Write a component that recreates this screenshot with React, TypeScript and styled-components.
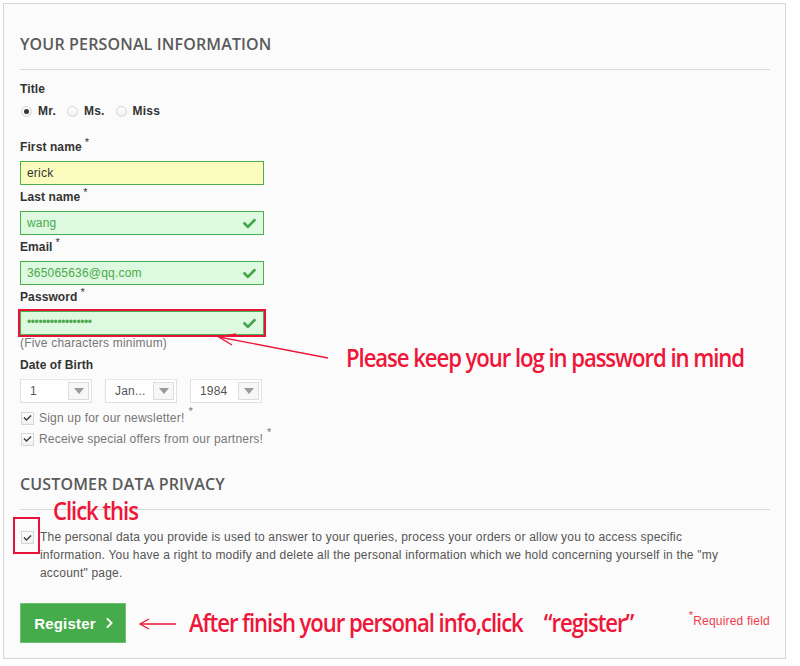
import React from "react";
import styled, { createGlobalStyle } from "styled-components";
import { FaCheck, FaChevronRight } from "react-icons/fa";

const Global = createGlobalStyle`
  html, body { margin: 0; padding: 0; background: #ffffff; }
  body { font-family: "Liberation Sans", Arial, sans-serif; letter-spacing: 0.2px; }
`;

const Frame = styled.div`
  position: relative;
  margin: 3px 0 0 3px;
  width: 783px;
  box-sizing: border-box;
  border: 1px solid #d6d6d6;
  background: #fbfbfb;
  padding: 29px 15px 15px 16px;
`;

const SectionTitle = styled.h3<{ $top?: number }>`
  margin: ${(p) => p.$top ?? 0}px 0 0 0;
  padding: 0 0 14px 0;
  border-bottom: 1px solid #d9d9d9;
  font-family: "Open Sans", sans-serif;
  font-weight: 600;
  font-size: 16px;
  line-height: 22px;
  letter-spacing: 0.15px;
  color: #5a5a5a;
  text-transform: uppercase;
`;

const Label = styled.div<{ $top?: number }>`
  margin-top: ${(p) => p.$top ?? 4}px;
  margin-bottom: 6px;
  font-size: 12px;
  line-height: 16px;
  font-weight: 700;
  color: #333333;
  letter-spacing: 0.1px;
  sup {
    font-weight: 400;
    font-size: 11px;
    margin-left: 3px;
    vertical-align: 5px;
    line-height: 0;
  }
`;

const RadioRow = styled.div`
  display: flex;
  align-items: center;
  height: 16px;
  margin-top: 6px;
`;

const RadioItem = styled.label`
  display: flex;
  align-items: center;
  font-size: 12px;
  font-weight: 700;
  color: #333;
  margin-right: 10px;
`;

const Radio = styled.span<{ $checked?: boolean }>`
  box-sizing: border-box;
  width: 11px;
  height: 11px;
  border-radius: 50%;
  border: 1px solid #d4d4d4;
  background: linear-gradient(#ffffff, #f0f0f0);
  margin: 0 6px 0 1px;
  display: flex;
  align-items: center;
  justify-content: center;
  &::after {
    content: "";
    display: ${(p) => (p.$checked ? "block" : "none")};
    width: 5px;
    height: 5px;
    border-radius: 50%;
    background: #333;
  }
`;

const InputBox = styled.div<{ $state: "focus" | "ok"; $highlight?: boolean }>`
  box-sizing: border-box;
  position: relative;
  width: 244px;
  height: 24px;
  border: 1px solid #4cae4c;
  background: ${(p) => (p.$state === "focus" ? "#fbfdbf" : "#ddf9df")};
  color: ${(p) => (p.$state === "focus" ? "#333" : "#4aa94d")};
  font-size: 12px;
  display: flex;
  align-items: center;
  padding: 0 6px;
  outline: ${(p) => (p.$highlight ? "2px solid #e8133a" : "none")};
  outline-offset: 0px;
`;

const OkIcon = styled(FaCheck)`
  position: absolute;
  right: 6px;
  top: 5px;
  width: 15px;
  height: 13px;
  color: #45a54a;
`;

const Dots = styled.span`
  font-size: 12px;
  letter-spacing: -0.4px;
  color: #4aa94d;
  transform: translateY(-1px);
`;

const Hint = styled.div`
  font-size: 12px;
  line-height: 16px;
  color: #777777;
`;

const SelectRow = styled.div`
  display: flex;
  gap: 13px;
`;

const Select = styled.div`
  box-sizing: border-box;
  width: 72px;
  height: 24px;
  display: flex;
  border: 1px solid #e0e0e0;
  border-top-color: #e6e6e6;
  background: #ffffff;
  font-size: 12px;
  color: #555;
`;

const SelectValue = styled.span`
  flex: 1;
  display: flex;
  align-items: center;
  padding-left: 9px;
`;

const SelectArrow = styled.span`
  box-sizing: border-box;
  width: 21px;
  margin: 2px 2px 2px 0;
  border: 1px solid #dcdcdc;
  background: #f7f7f7;
  display: flex;
  align-items: center;
  justify-content: center;
  &::after {
    content: "";
    border-left: 5px solid transparent;
    border-right: 5px solid transparent;
    border-top: 6px solid #9a9a9a;
  }
`;

const CheckRow = styled.div<{ $top?: number }>`
  display: flex;
  align-items: center;
  margin-top: ${(p) => p.$top ?? 5}px;
  height: 16px;
  font-size: 12px;
  color: #777;
`;

const Star = styled.span`
  font-size: 11px;
  margin-left: 4px;
  position: relative;
  top: -7px;
`;

const Box = styled.span`
  box-sizing: border-box;
  flex: none;
  width: 13px;
  height: 13px;
  margin: 0 5px 0 1px;
  border: 1px solid #d6d6d6;
  background: linear-gradient(#ffffff, #f1f1f1);
  display: flex;
  align-items: center;
  justify-content: center;
  svg {
    width: 9px;
    height: 8px;
    color: #444;
  }
`;

const Privacy = styled.div`
  display: flex;
  align-items: flex-start;
  margin-top: 18px;
`;

const PrivacyBox = styled(Box)`
  margin: 3px 6px 0 1px;
`;

const PrivacyText = styled.p`
  margin: 0;
  max-width: 690px;
  font-size: 12px;
  line-height: 18px;
  color: #555;
`;

const Footer = styled.div`
  display: flex;
  align-items: center;
  justify-content: space-between;
  margin-top: 21px;
`;

const RegisterButton = styled.button`
  box-sizing: border-box;
  width: 106px;
  height: 40px;
  border: 1px solid #6cc46f;
  background: #45ab4b;
  color: #ffffff;
  font-family: "Liberation Sans", Arial, sans-serif;
  font-size: 15px;
  font-weight: 700;
  letter-spacing: 0.2px;
  display: flex;
  align-items: center;
  justify-content: center;
  gap: 9px;
  padding: 0 0 0 2px;
  svg {
    width: 9px;
    height: 12px;
  }
`;

const Required = styled.div`
  font-size: 12px;
  color: #f03a4a;
  margin-bottom: 5px;
  sup {
    font-size: 11px;
    vertical-align: 6px;
    line-height: 0;
  }
`;

const Note = styled.div<{ $x: number; $y: number }>`
  position: absolute;
  left: ${(p) => p.$x}px;
  top: ${(p) => p.$y}px;
  font-family: "Open Sans", sans-serif;
  font-weight: 600;
  font-size: 25px;
  line-height: 30px;
  letter-spacing: -1.2px;
  color: #ee1639;
  white-space: pre;
  transform-origin: left center;
  transform: scaleX(0.885);
`;

const RedBox = styled.div`
  position: absolute;
  left: 9px;
  top: 513px;
  width: 27px;
  height: 37px;
  box-sizing: border-box;
  border: 2px solid #e8133a;
`;

const Overlay = styled.svg`
  position: absolute;
  left: -4px;
  top: -4px;
  pointer-events: none;
  overflow: visible;
`;

export default function App() {
  return (
    <>
      <Global />
      <Frame>
        <SectionTitle>Your personal information</SectionTitle>
        <Label $top={11}>Title</Label>
        <RadioRow>
          <RadioItem>
            <Radio $checked />
            Mr.
          </RadioItem>
          <RadioItem>
            <Radio />
            Ms.
          </RadioItem>
          <RadioItem>
            <Radio />
            Miss
          </RadioItem>
        </RadioRow>

        <Label $top={20}>
          First name<sup>*</sup>
        </Label>
        <InputBox $state="focus">erick</InputBox>

        <Label>
          Last name<sup>*</sup>
        </Label>
        <InputBox $state="ok">
          wang
          <OkIcon />
        </InputBox>

        <Label>
          Email<sup>*</sup>
        </Label>
        <InputBox $state="ok">
          365065636@qq.com
          <OkIcon />
        </InputBox>

        <Label>
          Password<sup>*</sup>
        </Label>
        <InputBox $state="ok" $highlight>
          <Dots>•••••••••••••••••</Dots>
          <OkIcon />
        </InputBox>
        <Hint>(Five characters minimum)</Hint>

        <Label $top={6}>Date of Birth</Label>
        <SelectRow>
          <Select>
            <SelectValue>1</SelectValue>
            <SelectArrow />
          </Select>
          <Select>
            <SelectValue>Jan...</SelectValue>
            <SelectArrow />
          </Select>
          <Select>
            <SelectValue>1984</SelectValue>
            <SelectArrow />
          </Select>
        </SelectRow>

        <CheckRow $top={7}>
          <Box>
            <FaCheck />
          </Box>
          <span>Sign up for our newsletter!</span>
          <Star>*</Star>
        </CheckRow>
        <CheckRow>
          <Box>
            <FaCheck />
          </Box>
          <span>Receive special offers from our partners!</span>
          <Star>*</Star>
        </CheckRow>

        <SectionTitle $top={26}>Customer data privacy</SectionTitle>
        <Privacy>
          <PrivacyBox>
            <FaCheck />
          </PrivacyBox>
          <PrivacyText>
            The personal data you provide is used to answer to your queries, process your orders or allow you to access
            specific information. You have a right to modify and delete all the personal information which we hold
            concerning yourself in the "my account" page.
          </PrivacyText>
        </Privacy>

        <Footer>
          <RegisterButton>
            Register
            <FaChevronRight />
          </RegisterButton>
          <Required>
            <sup>*</sup>Required field
          </Required>
        </Footer>

        <Overlay width="800" height="666">
          <g stroke="#ee1639" strokeWidth="1.3" fill="none">
            <line x1="328" y1="358" x2="219" y2="337" />
            <polyline points="236,334 219,337 232,345" />
            <line x1="140" y1="624" x2="176" y2="624" />
            <polyline points="149,619 140,624 149,629" />
          </g>
        </Overlay>
        <Note $x={342} $y={338}>Please keep your log in password in mind</Note>
        <Note $x={49} $y={491}>Click this</Note>
        <RedBox />
        <Note $x={185} $y={603}>{"After finish your personal info,click\u2003\u201Cregister\u201D"}</Note>
      </Frame>
    </>
  );
}
